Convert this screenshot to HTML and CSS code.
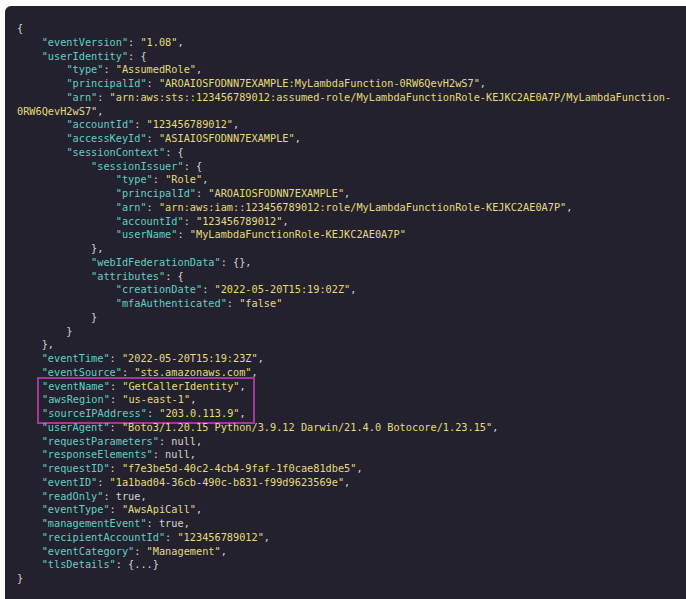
FILE: index.html
```html
<!DOCTYPE html>
<html lang="en">
<head>
    <meta charset="UTF-8">
    <meta name="viewport" content="width=device-width, initial-scale=1.0">
    <title>CloudTrail Event</title>
    <link rel="stylesheet" href="styles.css">
</head>
<body>
    <div class="panel">
<div class="code">{
    <span class="k">"eventVersion"</span>: <span class="s">"1.08"</span>,
    <span class="k">"userIdentity"</span>: {
        <span class="k">"type"</span>: <span class="s">"AssumedRole"</span>,
        <span class="k">"principalId"</span>: <span class="s">"AROAIOSFODNN7EXAMPLE:MyLambdaFunction-0RW6QevH2wS7"</span>,
        <span class="k">"arn"</span>: <span class="s">"arn:aws:sts::123456789012:assumed-role/MyLambdaFunctionRole-KEJKC2AE0A7P/MyLambdaFunction-
0RW6QevH2wS7"</span>,
        <span class="k">"accountId"</span>: <span class="s">"123456789012"</span>,
        <span class="k">"accessKeyId"</span>: <span class="s">"ASIAIOSFODNN7EXAMPLE"</span>,
        <span class="k">"sessionContext"</span>: {
            <span class="k">"sessionIssuer"</span>: {
                <span class="k">"type"</span>: <span class="s">"Role"</span>,
                <span class="k">"principalId"</span>: <span class="s">"AROAIOSFODNN7EXAMPLE"</span>,
                <span class="k">"arn"</span>: <span class="s">"arn:aws:iam::123456789012:role/MyLambdaFunctionRole-KEJKC2AE0A7P"</span>,
                <span class="k">"accountId"</span>: <span class="s">"123456789012"</span>,
                <span class="k">"userName"</span>: <span class="s">"MyLambdaFunctionRole-KEJKC2AE0A7P"</span>
            },
            <span class="k">"webIdFederationData"</span>: {},
            <span class="k">"attributes"</span>: {
                <span class="k">"creationDate"</span>: <span class="s">"2022-05-20T15:19:02Z"</span>,
                <span class="k">"mfaAuthenticated"</span>: <span class="s">"false"</span>
            }
        }
    },
    <span class="k">"eventTime"</span>: <span class="s">"2022-05-20T15:19:23Z"</span>,
    <span class="k">"eventSource"</span>: <span class="s">"sts.amazonaws.com"</span>,<div class="mark"><span class="k">"eventName"</span>: <span class="s">"GetCallerIdentity"</span>,
<span class="k">"awsRegion"</span>: <span class="s">"us-east-1"</span>,
<span class="k">"sourceIPAddress"</span>: <span class="s">"203.0.113.9"</span>,</div>    <span class="k">"userAgent"</span>: <span class="s">"Boto3/1.20.15 Python/3.9.12 Darwin/21.4.0 Botocore/1.23.15"</span>,
    <span class="k">"requestParameters"</span>: null,
    <span class="k">"responseElements"</span>: null,
    <span class="k">"requestID"</span>: <span class="s">"f7e3be5d-40c2-4cb4-9faf-1f0cae81dbe5"</span>,
    <span class="k">"eventID"</span>: <span class="s">"1a1bad04-36cb-490c-b831-f99d9623569e"</span>,
    <span class="k">"readOnly"</span>: true,
    <span class="k">"eventType"</span>: <span class="s">"AwsApiCall"</span>,
    <span class="k">"managementEvent"</span>: true,
    <span class="k">"recipientAccountId"</span>: <span class="s">"123456789012"</span>,
    <span class="k">"eventCategory"</span>: <span class="s">"Management"</span>,
    <span class="k">"tlsDetails"</span>: {...}
}</div>
    </div>
</body>
</html>
```

FILE: styles.css
```css
body, html {
    margin: 0;
    padding: 0;
    background-color: #ffffff;
}
.panel {
    margin: 6px 0 0 5px;
    padding: 16px 12px;
    min-height: calc(100vh - 6px);
    box-sizing: border-box;
    background-color: #23212d;
    border-radius: 6px 0 0 0;
}
.code {
    font-family: 'DejaVu Sans Mono', monospace;
    font-size: 10.25px;
    line-height: 13.75px;
    color: #d4d4d4;
    white-space: pre;
}
.k {
    color: #62cfc4;
}
.s {
    color: #e4dc7c;
}
.mark {
    width: fit-content;
    margin: -3px 0 -3px 20px;
    padding: 1px 7px 1px 3px;
    border: 2px solid #a8359e;
}
```
